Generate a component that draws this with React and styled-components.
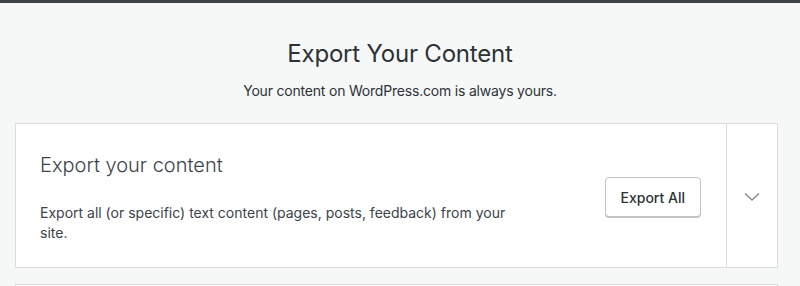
import styled, { createGlobalStyle } from "styled-components";

const GlobalStyle = createGlobalStyle`
    html, body {
        margin: 0;
        padding: 0;
        background: #f6f7f7;
        font-family: Inter, "Noto Sans", "Liberation Sans", sans-serif;
        color: #2c3338;
    }
`;

const ChevronDown = () => (
    <svg width="24" height="24" viewBox="0 0 24 24" fill="none">
        <path d="M5 9.5l7 6.5 7-6.5" stroke="#8c8f94" strokeWidth="1.6" />
    </svg>
);

export default function App() {
    return (
        <Page>
            <GlobalStyle />
            <TopBar />
            <Header>
                <h1 className="title">Export Your Content</h1>
                <p className="subtitle">Your content on WordPress.com is always yours.</p>
            </Header>
            <Cards>
                <Card>
                    <div className="main">
                        <div className="info">
                            <h2 className="cardTitle">Export your content</h2>
                            <p className="desc">
                                Export all (or specific) text content (pages, posts, feedback) from your site.
                            </p>
                        </div>
                        <Button>Export All</Button>
                    </div>
                    <Toggle>
                        <ChevronDown />
                    </Toggle>
                </Card>
                <Card $empty />
            </Cards>
        </Page>
    );
}

const Page = styled.div`
    min-height: 100vh;
    overflow: hidden;
`;

const TopBar = styled.div`
    height: 3px;
    background: #3c434a;
`;

const Header = styled.div`
    text-align: center;
    padding-top: 35px;

    .title {
        margin: 0;
        font-size: 24px;
        line-height: 32px;
        font-weight: 400;
        color: #2c3338;
        letter-spacing: -0.2px;
    }

    .subtitle {
        margin: 11px 0 0;
        font-size: 14px;
        line-height: 20px;
        color: #2c3338;
        letter-spacing: -0.2px;
    }
`;

const Cards = styled.div`
    display: flex;
    flex-direction: column;
    gap: 16px;
    margin: 22px 22px 0 15px;
`;

const Card = styled.div`
    display: flex;
    background: #fff;
    border: 1px solid #dcdcde;
    min-height: ${(props) => (props.$empty ? "60px" : "auto")};

    .main {
        flex: 1;
        display: flex;
        align-items: center;
        padding: 27px 25px 24px 24px;
    }

    .info {
        flex: 1;
    }

    .cardTitle {
        margin: 0;
        font-size: 20px;
        line-height: 28px;
        font-weight: 300;
        color: #3c434a;
    }

    .desc {
        margin: 24px 0 0;
        max-width: 475px;
        font-size: 14px;
        line-height: 20px;
        color: #3c434a;
    }
`;

const Button = styled.button`
    height: 40px;
    padding: 0 15px;
    background: #fff;
    border: 1px solid #c3c4c7;
    border-radius: 4px;
    box-shadow: 0 1px 0 #c3c4c7;
    font-family: inherit;
    font-size: 14px;
    font-weight: 500;
    color: #2c3338;
    cursor: pointer;
`;

const Toggle = styled.div`
    width: 50px;
    border-left: 1px solid #dcdcde;
    display: flex;
    align-items: center;
    justify-content: center;
`;
